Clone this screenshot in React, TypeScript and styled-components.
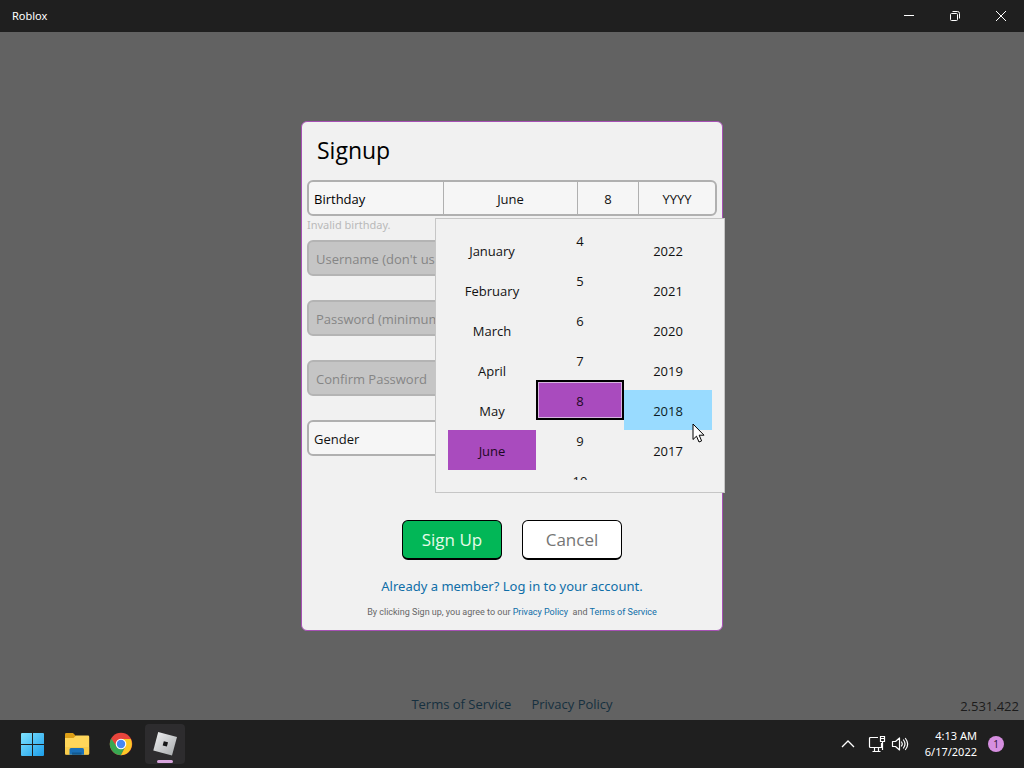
import React, { useState } from "react";
import styled, { createGlobalStyle, css } from "styled-components";

const GlobalStyle = createGlobalStyle`
  *, *::before, *::after { box-sizing: border-box; }
  body {
    margin: 0;
    background: #606060;
    font-family: "Open Sans", "Noto Sans", sans-serif;
    font-size: 13px;
    color: #111;
  }
  button, input, select { font: inherit; color: inherit; }
  button { cursor: default; }
  a { text-decoration: none; }
`;

const captionFont = `"Noto Sans", "Open Sans", sans-serif`;

const Desktop = styled.div`
  min-height: 100vh;
  display: flex;
  flex-direction: column;
`;

const TitleBar = styled.header`
  height: 32px;
  display: flex;
  align-items: center;
  justify-content: space-between;
  padding-left: 12px;
  background: #1f1f1f;
  color: #fff;
  font-family: ${captionFont};
  font-size: 11px;
  line-height: 14px;
`;

const WindowControls = styled.div`
  display: flex;
  align-self: stretch;
`;

const WindowButton = styled.button`
  width: 46px;
  display: grid;
  place-items: center;
  padding: 0;
  border: 0;
  background: none;
  color: #fff;
`;

const Main = styled.main`
  flex: 1;
  display: grid;
  grid-template-rows: 1fr auto 1fr;
  justify-items: center;
  background: #626262;
`;

const Card = styled.form`
  grid-row: 2;
  width: 422px;
  max-width: 100%;
  padding: 8px 5px 10px;
  border: 1px solid #a650b4;
  border-radius: 6px;
  background: #f1f1f1;
`;

const CardTitle = styled.h1`
  margin: 0;
  padding: 0 10px;
  height: 50px;
  font-size: 23px;
  line-height: 40px;
  font-weight: 400;
  color: #000;
`;

const Field = styled.div`
  position: relative;
  height: 60px;
`;

const control = css`
  width: 100%;
  height: 36px;
  border: 2px solid #b0b0b0;
  border-radius: 6px;
  background: #f6f6f6;
`;

const DateGroup = styled.div`
  ${control}
  display: grid;
  grid-template-columns: 134px 1fr 61px 77px;
  overflow: hidden;
`;

const DateLabel = styled.span`
  padding-left: 5px;
  line-height: 34px;
  color: #000;
`;

const DatePart = styled.button`
  padding: 0;
  border: 0;
  border-left: 1px solid #b0b0b0;
  background: none;
  line-height: 34px;
`;

const Hint = styled.p`
  margin: 0;
  font-family: ${captionFont};
  font-size: 11px;
  line-height: 18px;
  color: #b9b9b9;
`;

const TextInput = styled.input`
  ${control}
  padding: 2px 7px 0;
  border-color: #b4b4b4;
  background: #c5c5c5;
  &::placeholder { color: #858585; opacity: 1; }
`;

const Select = styled.select`
  ${control}
  appearance: none;
  padding: 2px 5px 0;
`;

const Flyout = styled.div`
  position: absolute;
  z-index: 1;
  top: 38px;
  left: 128px;
  display: grid;
  grid-template-columns: repeat(3, 88px);
  height: 275px;
  padding: 11px 12px 12px;
  border: 1px solid #c6c6c6;
  background: #f1f1f1;
`;

const Column = styled.div`
  overflow: hidden;
`;

const Options = styled.div<{ $scroll?: number }>`
  margin-top: ${(p) => -(p.$scroll ?? 0)}px;
`;

type OptionState = "idle" | "selected" | "focused" | "hovered";

const Option = styled.button<{ $state: OptionState }>`
  display: block;
  width: 100%;
  height: 40px;
  padding: 2px 0 0;
  border: 0;
  background: none;
  ${(p) =>
    (p.$state === "selected" || p.$state === "focused") &&
    css`
      background: #a94bbe;
      color: #1d0824;
    `}
  ${(p) =>
    p.$state === "focused" &&
    css`
      border: 2px solid #000;
      box-shadow: inset 0 0 0 1px #d9b4e2;
    `}
  ${(p) =>
    p.$state === "hovered" &&
    css`
      background: #99dbff;
      color: #0c1c26;
    `}
`;

const Pointer = styled.svg`
  position: absolute;
  top: 204px;
  left: 256px;
`;

const Actions = styled.div`
  display: flex;
  justify-content: center;
  gap: 20px;
  padding: 40px 0 15px;
`;

const ActionButton = styled.button<{ $primary?: boolean }>`
  width: 100px;
  height: 40px;
  padding: 0;
  border: 1px solid #000;
  border-bottom-width: 2px;
  border-radius: 6px;
  background: ${(p) => (p.$primary ? "#02b757" : "#fff")};
  color: ${(p) => (p.$primary ? "#e6fbe9" : "#757575")};
  font-size: 17px;
`;

const LoginLine = styled.p`
  margin: 0;
  text-align: center;
  font-family: ${captionFont};
  line-height: 22px;
`;

const Legal = styled.p`
  margin: 7px 0 0;
  text-align: center;
  font-family: Roboto, "Open Sans", sans-serif;
  font-size: 9px;
  line-height: 16px;
  color: #666;
`;

const Link = styled.a`
  color: #0f6ea8;
`;

const PageFooter = styled.footer`
  grid-row: 3;
  align-self: end;
  justify-self: stretch;
  display: grid;
  grid-template-columns: 1fr auto 1fr;
  align-items: end;
  padding: 0 5px 3px;
  line-height: 22px;
`;

const FooterLinks = styled.nav`
  grid-column: 2;
  display: flex;
  gap: 20px;
  padding-bottom: 2px;
`;

const FooterLink = styled.a`
  color: #16303f;
`;

const Version = styled.span`
  justify-self: end;
  color: #1c1c1c;
`;

const Taskbar = styled.footer`
  height: 48px;
  display: flex;
  align-items: center;
  justify-content: space-between;
  padding: 0 20px 0 13px;
  background: #1f1f1f;
  color: #fff;
`;

const Apps = styled.div`
  display: flex;
  gap: 4px;
`;

const AppButton = styled.button<{ $active?: boolean }>`
  position: relative;
  width: 40px;
  height: 40px;
  display: grid;
  place-items: center;
  padding: 0;
  border: 0;
  border-radius: 4px;
  background: ${(p) => (p.$active ? "#2d2c2e" : "none")};
  ${(p) =>
    p.$active &&
    css`
      &::after {
        content: "";
        position: absolute;
        bottom: 1px;
        left: 12px;
        width: 16px;
        height: 3px;
        border-radius: 2px;
        background: #d7a5dd;
      }
    `}
`;

const Tray = styled.div`
  display: flex;
  align-items: center;
`;

const TrayButton = styled.button`
  display: flex;
  align-items: center;
  gap: 5px;
  padding: 0;
  margin-right: 13px;
  border: 0;
  background: none;
`;

const Clock = styled.time`
  margin: 0 11px 0 3px;
  text-align: right;
  font-family: ${captionFont};
  font-size: 11px;
  line-height: 16px;
`;

const Badge = styled.span`
  width: 16px;
  height: 16px;
  border-radius: 50%;
  background: #d68fe0;
  color: #2c1232;
  font-size: 10px;
  line-height: 16px;
  text-align: center;
`;

const months = ["January", "February", "March", "April", "May", "June"];
const days = ["4", "5", "6", "7", "8", "9", "10"];
const years = ["2022", "2021", "2020", "2019", "2018", "2017"];

const WindowsIcon = () => (
  <svg width="24" height="24" viewBox="0 0 24 24">
    <defs>
      <linearGradient id="win" x1="0" y1="0" x2="1" y2="1" gradientUnits="objectBoundingBox">
        <stop offset="0" stopColor="#7fe3ff" />
        <stop offset="1" stopColor="#1c9eea" />
      </linearGradient>
    </defs>
    <path
      fill="url(#win)"
      d="M1 1H11V12H0V2Q0 1 1 1ZM12 1H22Q23 1 23 2V12H12ZM0 13H11V24H1Q0 24 0 23ZM12 13H23V23Q23 24 22 24H12Z"
    />
  </svg>
);

const FolderIcon = () => (
  <svg width="26" height="24" viewBox="0 0 26 24">
    <path fill="#dd9f16" d="M1 2.200Q1 1 2.200 1H9L12 4V8H1Z" />
    <path fill="#ffd65a" d="M1 6H9.500L12 3.500H24Q25.200 3.500 25.200 4.700V21.500Q25.200 22.700 24 22.700H2.200Q1 22.700 1 21.500Z" />
    <path fill="#f3c23c" d="M1 15H25.200V21.500Q25.200 22.700 24 22.700H2.200Q1 22.700 1 21.500Z" opacity=".5" />
    <path fill="#1a70b8" d="M5.500 22.700V17.500Q5.500 16 7 16H18.500Q20 16 20 17.500V22.700Z" />
    <path fill="#12598f" d="M8 22.700V20.500H17.500V22.700Z" />
  </svg>
);

const ChromeIcon = () => (
  <svg width="24" height="24" viewBox="0 0 24 24">
    <circle cx="12" cy="12" r="11.200" fill="#e8453c" />
    <path fill="#38a852" d="M2.300 6.400A11.200 11.200 0 0 0 12 23.200L16.400 14.600 7.600 14.600Z" />
    <path fill="#fbc926" d="M12 23.200A11.200 11.200 0 0 0 21.700 6.900H12L16.500 14.600Z" />
    <circle cx="12" cy="12" r="5.300" fill="#fff" />
    <circle cx="12" cy="12" r="4.200" fill="#4587f3" />
  </svg>
);

const RobloxIcon = () => (
  <svg width="28" height="28" viewBox="0 0 28 28">
    <defs>
      <linearGradient id="rbx" x1="0" y1="0" x2="1" y2="1">
        <stop offset="0" stopColor="#f1f2f3" />
        <stop offset="1" stopColor="#a5a8ab" />
      </linearGradient>
    </defs>
    <path fill="url(#rbx)" d="M7.200 2 26 7 21 25.500 2.300 20.500Z" />
    <path fill="#151617" d="M12.800 11.200 17 12.300 15.900 16.500 11.700 15.400Z" />
  </svg>
);

const optionState = (value: string, selected: string, hovered?: string): OptionState =>
  value === selected ? "selected" : value === hovered ? "hovered" : "idle";

export default function App() {
  const [month, setMonth] = useState("June");
  const [day, setDay] = useState("8");
  const [year, setYear] = useState("");

  return (
    <Desktop>
      <GlobalStyle />
      <TitleBar>
        <span>Roblox</span>
        <WindowControls>
          <WindowButton aria-label="Minimize">
            <svg width="12" height="12" fill="none" stroke="currentColor">
              <path d="M1 5.500H11" />
            </svg>
          </WindowButton>
          <WindowButton aria-label="Restore">
            <svg width="12" height="12" fill="none" stroke="currentColor">
              <rect x="1.500" y="3.500" width="7" height="7" rx="1" />
              <path d="M3.500 1.500H8.500Q10.500 1.500 10.500 3.500V8.500" />
            </svg>
          </WindowButton>
          <WindowButton aria-label="Close">
            <svg width="12" height="12" fill="none" stroke="currentColor">
              <path d="M1 1 11 11M11 1 1 11" />
            </svg>
          </WindowButton>
        </WindowControls>
      </TitleBar>

      <Main>
        <Card onSubmit={(e) => e.preventDefault()}>
          <CardTitle>Signup</CardTitle>
          <Field>
            <DateGroup role="group" aria-labelledby="birthday">
              <DateLabel id="birthday">Birthday</DateLabel>
              <DatePart type="button" aria-haspopup="listbox">{month}</DatePart>
              <DatePart type="button" aria-haspopup="listbox">{day}</DatePart>
              <DatePart type="button" aria-haspopup="listbox">{year || "YYYY"}</DatePart>
            </DateGroup>
            <Hint>Invalid birthday.</Hint>
            <Flyout>
              <Column role="listbox" aria-label="Month">
                <Options>
                  {months.map((m) => (
                    <Option key={m} type="button" role="option" aria-selected={m === month} $state={optionState(m, month)} onClick={() => setMonth(m)}>
                      {m}
                    </Option>
                  ))}
                </Options>
              </Column>
              <Column role="listbox" aria-label="Day">
                <Options $scroll={10}>
                  {days.map((d) => (
                    <Option key={d} type="button" role="option" aria-selected={d === day} $state={d === day ? "focused" : "idle"} onClick={() => setDay(d)}>
                      {d}
                    </Option>
                  ))}
                </Options>
              </Column>
              <Column role="listbox" aria-label="Year">
                <Options>
                  {years.map((y) => (
                    <Option key={y} type="button" role="option" aria-selected={y === year} $state={optionState(y, year, "2018")} onClick={() => setYear(y)}>
                      {y}
                    </Option>
                  ))}
                </Options>
              </Column>
              <Pointer width="13" height="21" viewBox="0 0 13 21" aria-hidden="true">
                <path d="M1 1V16.500L4.500 13.200 7 19 9.600 17.900 7.200 12.200H12Z" fill="#fff" stroke="#000" />
              </Pointer>
            </Flyout>
          </Field>
          <Field>
            <TextInput aria-label="Username" placeholder="Username (don't use your real name)" disabled />
          </Field>
          <Field>
            <TextInput type="password" aria-label="Password" placeholder="Password (minimum length 8)" disabled />
          </Field>
          <Field>
            <TextInput type="password" aria-label="Confirm Password" placeholder="Confirm Password" disabled />
          </Field>
          <Field>
            <Select aria-label="Gender" defaultValue="">
              <option value="">Gender</option>
            </Select>
          </Field>
          <Actions>
            <ActionButton type="submit" $primary>Sign Up</ActionButton>
            <ActionButton type="button">Cancel</ActionButton>
          </Actions>
          <LoginLine>
            <Link href="#login">Already a member? Log in to your account.</Link>
          </LoginLine>
          <Legal>
            By clicking Sign up, you agree to our <Link href="#privacy">Privacy Policy</Link>&nbsp; and{" "}
            <Link href="#terms">Terms of Service</Link>
          </Legal>
        </Card>
        <PageFooter>
          <FooterLinks>
            <FooterLink href="#terms">Terms of Service</FooterLink>
            <FooterLink href="#privacy">Privacy Policy</FooterLink>
          </FooterLinks>
          <Version>2.531.422</Version>
        </PageFooter>
      </Main>

      <Taskbar>
        <Apps>
          <AppButton aria-label="Start"><WindowsIcon /></AppButton>
          <AppButton aria-label="File Explorer"><FolderIcon /></AppButton>
          <AppButton aria-label="Chrome"><ChromeIcon /></AppButton>
          <AppButton aria-label="Roblox" $active><RobloxIcon /></AppButton>
        </Apps>
        <Tray>
          <TrayButton aria-label="Show hidden icons">
            <svg width="14" height="10" fill="none" stroke="currentColor" strokeWidth="1.300">
              <path d="M1 8 7 2 13 8" />
            </svg>
          </TrayButton>
          <TrayButton aria-label="Network and volume">
            <svg width="18" height="18" fill="none" stroke="currentColor" strokeWidth="1.200">
              <path d="M10 2.500H2.500Q1.500 2.500 1.500 3.500V11.500Q1.500 12.500 2.500 12.500H13.500V8M4.500 16.500H12.500M6.500 12.500V16.500M10.500 12.500V16.500" />
              <path d="M12.500 1.500H16.500V6.500H12.500ZM14.500 6.500V15M13 3.500H16" />
            </svg>
            <svg width="18" height="18" fill="none" stroke="currentColor" strokeWidth="1.200" strokeLinejoin="round" strokeLinecap="round">
              <path d="M1.500 6.500H4.500L8.500 3V15L4.500 11.500H1.500Z" />
              <path d="M10.500 7Q12 9 10.500 11M12.500 5Q15.500 9 12.500 13M14.500 3.500Q18.800 9 14.500 14.500" />
            </svg>
          </TrayButton>
          <Clock>
            4:13 AM
            <br />
            6/17/2022
          </Clock>
          <Badge>1</Badge>
        </Tray>
      </Taskbar>
    </Desktop>
  );
}
